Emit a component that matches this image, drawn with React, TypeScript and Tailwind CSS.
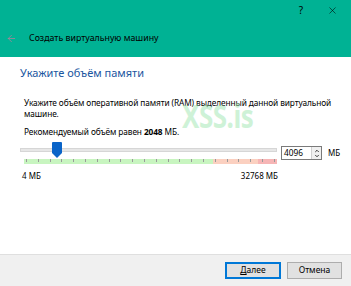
import { ArrowLeft, X, ChevronUp, ChevronDown } from "lucide-react";

const ticks = Array.from({ length: 22 }, (_, i) => i);

export default function App() {
  return (
    <div
      className="relative w-[351px] h-[286px] flex flex-col bg-white text-black overflow-hidden"
      style={{ fontFamily: '"Noto Sans", "Open Sans", sans-serif' }}
    >
      {/* title bar */}
      <div className="h-[57px] bg-[#00b294] flex flex-col">
        <div className="h-[22px] flex justify-end items-center pr-[13px] gap-[24px] text-[10px] text-black">
          <span className="leading-none">?</span>
          <X size={11} strokeWidth={1.2} />
        </div>
        <div className="flex items-center h-[40px] pl-[6px] -mt-[1px]">
          <ArrowLeft size={11} strokeWidth={1.5} className="text-[#c47a9a]" />
          <span className="ml-[12px] text-[8.8px]">Создать виртуальную машину</span>
        </div>
      </div>

      {/* body */}
      <div className="flex-1 flex flex-col px-[20px] pt-[9px]">
        <h1 className="text-[11px] text-[#1a56a0] leading-[14px]">Укажите объём памяти</h1>
        <p className="mt-[17px] pl-[4px] -mr-[8px] text-[8.3px] leading-[11px] tracking-[-0.1px]">
          Укажите объём оперативной памяти (RAM) выделенный данной виртуальной машине.
        </p>
        <p className="mt-[7px] pl-[4px] text-[8.3px] leading-[11px] tracking-[-0.1px]">
          Рекомендуемый объём равен <b>2048</b> МБ.
        </p>

        <div className="mt-[5px] flex items-start">
          <div className="w-[262px] flex flex-col">
            <div className="relative h-[16px] flex items-center">
              <div className="w-full h-[4px] bg-[#e7e7e7] border border-[#d6d6d6]" />
              <div className="absolute left-[32px] top-0 w-[10px] h-[16px] flex flex-col items-center">
                <div className="w-[10px] h-[11px] bg-[#0a64c8] rounded-t-[1px]" />
                <div className="w-0 h-0 border-l-[5px] border-r-[5px] border-t-[5px] border-l-transparent border-r-transparent border-t-[#0a64c8]" />
              </div>
            </div>
            <div className="relative ml-[4px] mt-[1px] w-[253px] h-[5px] flex">
              <div className="w-[189px] bg-[#c8f5c0]" />
              <div className="w-[45px] bg-[#fbd0c0]" />
              <div className="w-[19px] bg-[#f6b5b5]" />
              <div className="absolute inset-x-0 top-0 h-[3px] flex justify-between px-[2px]">
                {ticks.map((t) => (
                  <div key={t} className="w-[1px] h-[3px] bg-[#9a9a9a]" />
                ))}
              </div>
            </div>
          </div>
          <div className="ml-[4px] mt-[4px] flex items-center">
            <div className="w-[41px] h-[14px] border border-[#7a7a7a] flex items-center bg-white">
              <span className="flex-1 pl-[2px] text-[8.3px] leading-none">4096</span>
              <div className="w-[10px] h-[12px] border-l border-[#d0d0d0] bg-[#f0f0f0] flex flex-col items-center justify-center">
                <ChevronUp size={6} strokeWidth={3} className="-mb-[1px]" />
                <ChevronDown size={6} strokeWidth={3} />
              </div>
            </div>
            <span className="ml-[6px] text-[8px]">МБ</span>
          </div>
        </div>

        <div className="w-[262px] mt-[6px] flex justify-between text-[8px] leading-[11px] pl-[2px]">
          <span>4 МБ</span>
          <span className="pr-[4px]">32768 МБ</span>
        </div>
      </div>

      {/* footer */}
      <div className="h-[32px] bg-[#f0f0f0] border-t border-[#dfdfdf] flex items-center justify-end gap-[6px] pr-[9px]">
        <button className="w-[56px] h-[17px] border border-[#0078d7] bg-[#e1e1e1] text-[8.5px] leading-none shadow-[inset_0_0_0_1px_#0078d7]">
          <span className="underline">Д</span>алее
        </button>
        <button className="w-[55px] h-[17px] border border-[#adadad] bg-[#e1e1e1] text-[8.5px] leading-none">
          Отмена
        </button>
      </div>

      {/* watermark */}
      <div className="absolute left-[182px] top-[99px] text-[26px] font-bold text-[#9fe6b0] opacity-50 leading-none tracking-[-0.5px] scale-y-125 origin-top">
        XSS.is
      </div>
    </div>
  );
}
